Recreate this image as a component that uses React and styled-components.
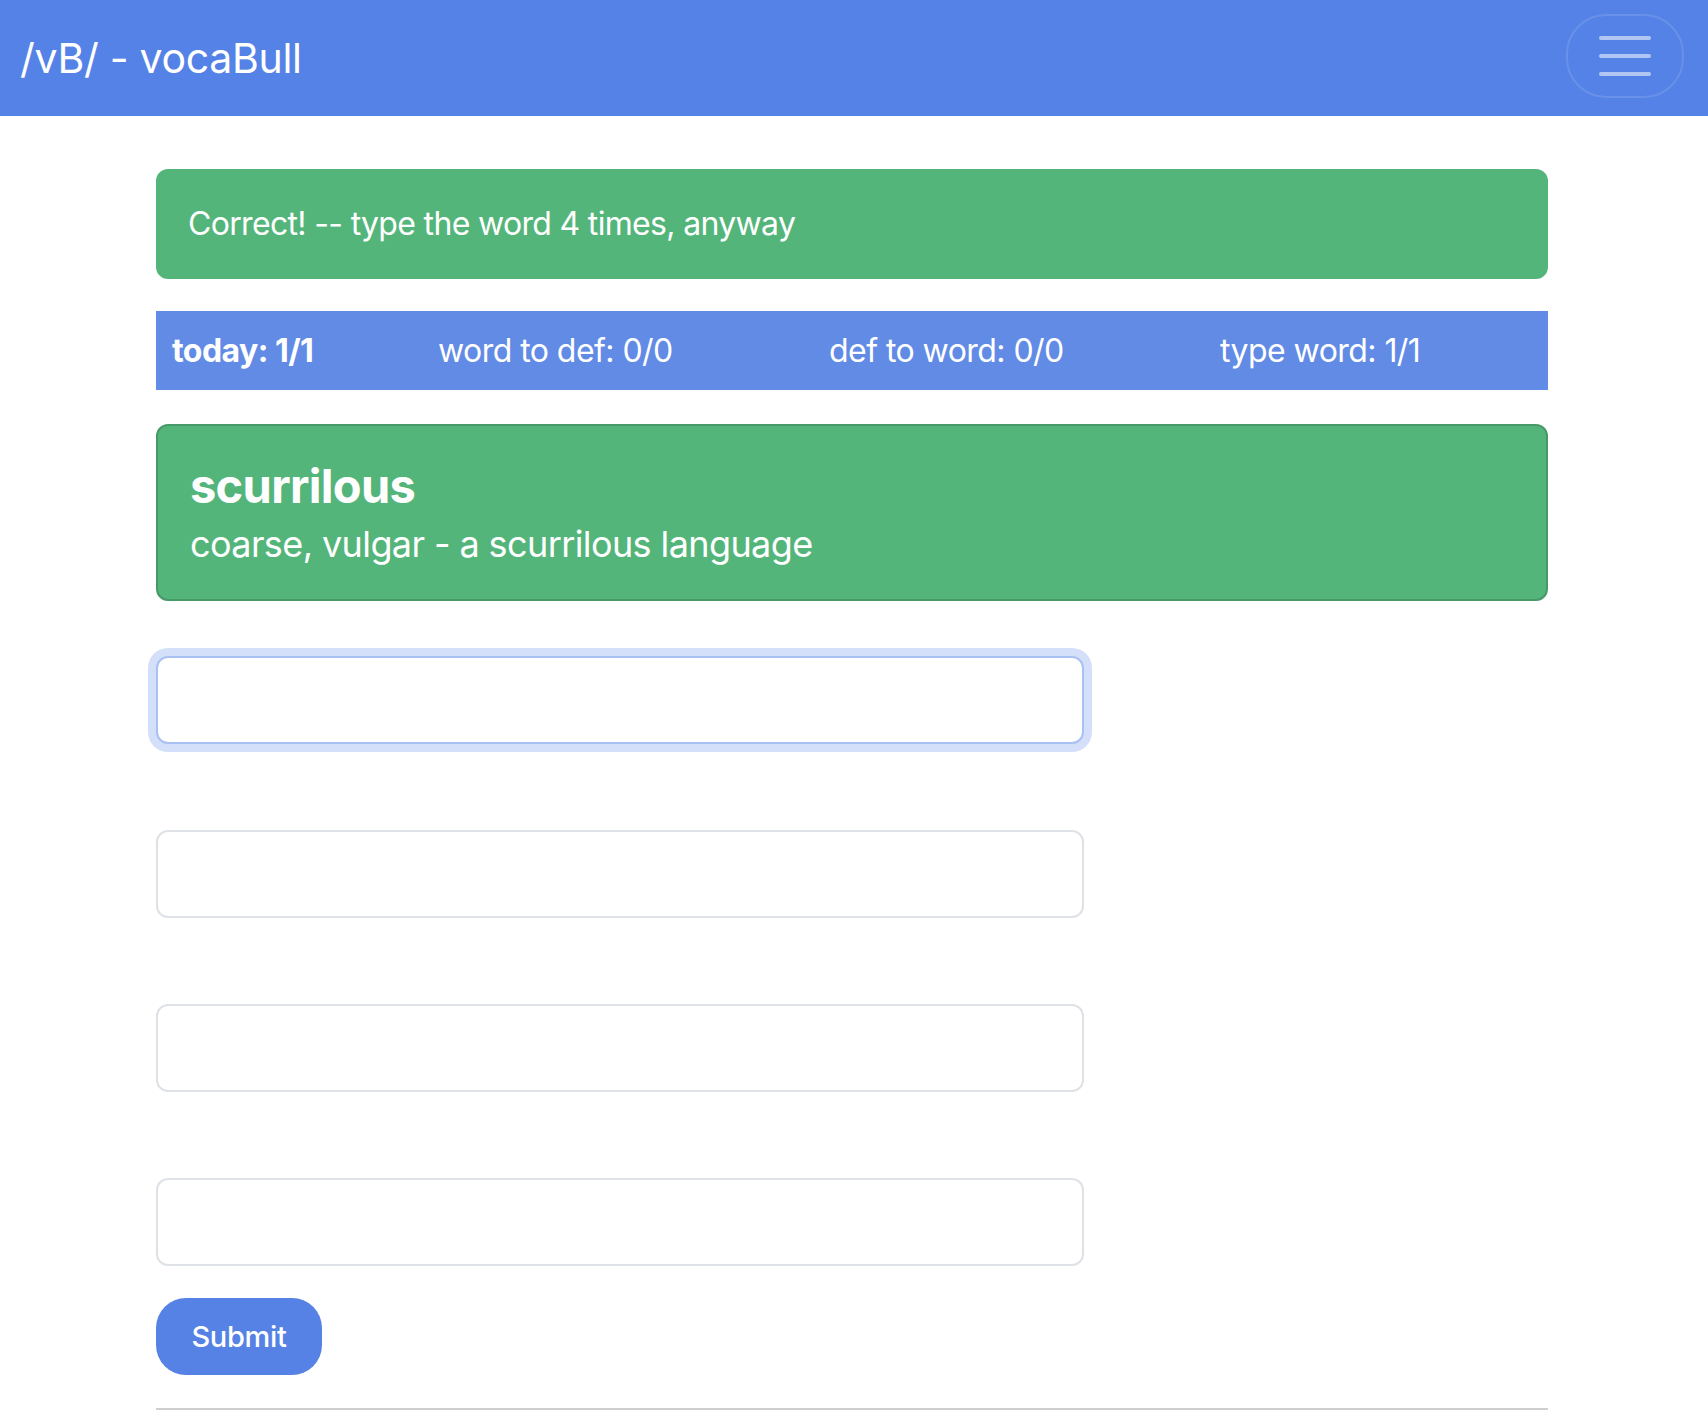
import React from "react";
import styled, { createGlobalStyle } from "styled-components";

const GlobalStyle = createGlobalStyle`
  body {
    margin: 0;
    background: #fff;
    font-family: Inter, "Noto Sans", "Liberation Sans", sans-serif;
    color: #212529;
  }
`;

const Navbar = styled.nav`
  display: flex;
  align-items: center;
  justify-content: space-between;
  height: 116px;
  padding: 0 24px 0 20px;
  background: #5582e6;
`;

const Brand = styled.a`
  font-size: 41px;
  line-height: 60px;
  color: #fff;
  text-decoration: none;
  letter-spacing: -0.3px;
`;

const Toggler = styled.button`
  display: flex;
  align-items: center;
  justify-content: center;
  width: 118px;
  height: 84px;
  margin-top: -4px;
  background: transparent;
  border: 2px solid rgba(255, 255, 255, 0.12);
  border-radius: 40px;
  cursor: pointer;
`;

const Container = styled.main`
  width: 1392px;
  margin: 53px 0 0 calc(50% - 698px);
`;

const Alert = styled.div`
  padding: 29px 30px;
  border: 2px solid #54b57b;
  border-radius: 12px;
  background: #54b57b;
  color: #fff;
  font-size: 32px;
  line-height: 48px;
  letter-spacing: -0.67px;
`;

const StatsTable = styled.table`
  width: 100%;
  margin-top: 32px;
  border-collapse: collapse;
  table-layout: fixed;
  background: #628be6;
  color: #fff;
  font-size: 32px;
  line-height: 47px;
  letter-spacing: -0.55px;
`;

const StatCell = styled.td`
  box-sizing: border-box;
  width: ${(props) => props.$width}px;
  padding: 16px;
  text-align: left;
  white-space: nowrap;
  font-weight: ${(props) => (props.$bold ? 700 : 400)};
`;

const WordCard = styled.div`
  margin-top: 34px;
  padding: 32px 32px 31px;
  border: 2px solid #479a68;
  border-radius: 12px;
  background: #54b57b;
  color: #fff;
`;

const WordTitle = styled.h5`
  margin: 0 0 6px;
  font-size: 47px;
  line-height: 56px;
  font-weight: 700;
  letter-spacing: -0.7px;
`;

const WordText = styled.p`
  margin: 0;
  font-size: 36px;
  line-height: 48px;
  letter-spacing: -0.6px;
`;

const Form = styled.form`
  display: flex;
  flex-direction: column;
  align-items: flex-start;
  margin-top: 55px;
`;

const Fields = styled.div`
  display: flex;
  flex-direction: column;
  gap: 86px;
`;

const Input = styled.input`
  box-sizing: border-box;
  width: 928px;
  height: 88px;
  padding: 16px 24px;
  font-family: inherit;
  font-size: 32px;
  border: 2px solid ${(props) => (props.$focused ? "#a9c0f2" : "#dee2e6")};
  border-radius: 12px;
  outline: none;
  background: #fff;
  box-shadow: ${(props) =>
    props.$focused ? "0 0 0 8px rgba(85, 130, 230, 0.25)" : "none"};
`;

const SubmitButton = styled.button`
  margin-top: 32px;
  width: 166px;
  height: 77px;
  border: none;
  border-radius: 30px;
  background: #5582e4;
  color: #fff;
  font-family: inherit;
  font-size: 29px;
  font-weight: 500;
  letter-spacing: -0.3px;
  cursor: pointer;
`;

const Divider = styled.hr`
  margin: 33px 0 0;
  border: none;
  border-top: 2px solid #cfcfcf;
`;

const stats = [
  { label: "today: 1/1", bold: true, width: 266 },
  { label: "word to def: 0/0", width: 391 },
  { label: "def to word: 0/0", width: 391 },
  { label: "type word: 1/1", width: 344 },
];

const HamburgerIcon = () => (
  <svg width="56" height="44" viewBox="0 0 56 44">
    <g stroke="rgba(255,255,255,0.55)" strokeWidth="4" strokeLinecap="round">
      <line x1="4" y1="4" x2="52" y2="4" />
      <line x1="4" y1="22" x2="52" y2="22" />
      <line x1="4" y1="40" x2="52" y2="40" />
    </g>
  </svg>
);

export default function App() {
  return (
    <>
      <GlobalStyle />
      <Navbar>
        <Brand href="#">/vB/ - vocaBull</Brand>
        <Toggler aria-label="Toggle navigation">
          <HamburgerIcon />
        </Toggler>
      </Navbar>
      <Container>
        <Alert>Correct! -- type the word 4 times, anyway</Alert>
        <StatsTable>
          <tbody>
            <tr>
              {stats.map((s) => (
                <StatCell key={s.label} $bold={s.bold} $width={s.width}>
                  {s.label}
                </StatCell>
              ))}
            </tr>
          </tbody>
        </StatsTable>
        <WordCard>
          <WordTitle>scurrilous</WordTitle>
          <WordText>coarse, vulgar - a scurrilous language</WordText>
        </WordCard>
        <Form onSubmit={(e) => e.preventDefault()}>
          <Fields>
            {[0, 1, 2, 3].map((i) => (
              <Input key={i} type="text" $focused={i === 0} />
            ))}
          </Fields>
          <SubmitButton type="submit">Submit</SubmitButton>
        </Form>
        <Divider />
      </Container>
    </>
  );
}
